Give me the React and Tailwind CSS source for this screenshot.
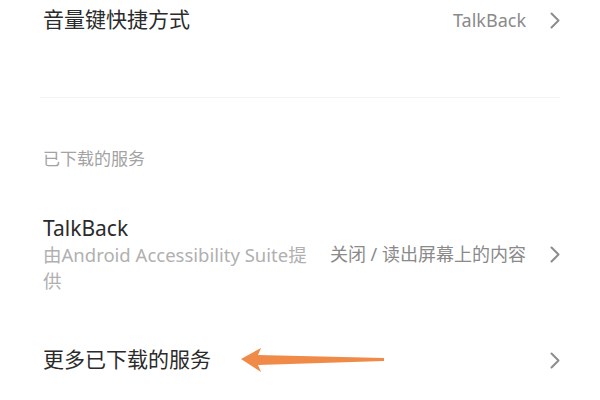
import React from "react";

const font = { fontFamily: '"Noto Sans", "Noto Sans CJK SC", sans-serif' };

const Chevron = () => (
  <svg width="10" height="17" viewBox="0 0 10 17" className="shrink-0">
    <path d="M1.5 1.5 L8.5 8.5 L1.5 15.5" fill="none" stroke="#8c8c8c" strokeWidth="2" strokeLinecap="round" strokeLinejoin="round" />
  </svg>
);

const Arrow = () => (
  <svg width="144" height="26" viewBox="0 0 144 26" className="shrink-0">
    <polygon points="0,12 20,1 17,8 143,11 143,14 17,18 20,25" fill="#f08a48" />
  </svg>
);

export default function App() {
  return (
    <div className="w-[600px] h-[400px] overflow-hidden bg-white pl-[43px] pr-[40px]" style={font}>
      {/* 音量键快捷方式 */}
      <div className="h-[40px] flex items-center justify-between">
        <span className="text-[21px] text-[#2b2b2b]">音量键快捷方式</span>
        <div className="flex items-center gap-[24px]">
          <span className="text-[18px] text-[#8a8a8a]">TalkBack</span>
          <Chevron />
        </div>
      </div>

      <div className="mt-[57px] -ml-[3px] h-px bg-[#f2f2f2]" />

      {/* 已下载的服务 */}
      <div className="mt-[50px] h-[22px] leading-[22px] text-[17px] text-[#a3a3a3]">已下载的服务</div>

      <div className="mt-[44px] flex items-center justify-between">
        <div className="w-[272px]">
          <div className="text-[21px] leading-[28px] text-[#2b2b2b]">TalkBack</div>
          <div className="text-[18.5px] leading-[26px] text-[#b0b0b0]">由Android Accessibility Suite提供</div>
        </div>
        <div className="flex items-center gap-[24px]">
          <span className="text-[18px] text-[#8a8a8a]">关闭 / 读出屏幕上的内容</span>
          <Chevron />
        </div>
      </div>

      {/* 更多已下载的服务 */}
      <div className="mt-[46px] h-[40px] flex items-center justify-between">
        <div className="flex items-center gap-[30px]">
          <span className="text-[21px] text-[#2b2b2b]">更多已下载的服务</span>
          <Arrow />
        </div>
        <Chevron />
      </div>
    </div>
  );
}
